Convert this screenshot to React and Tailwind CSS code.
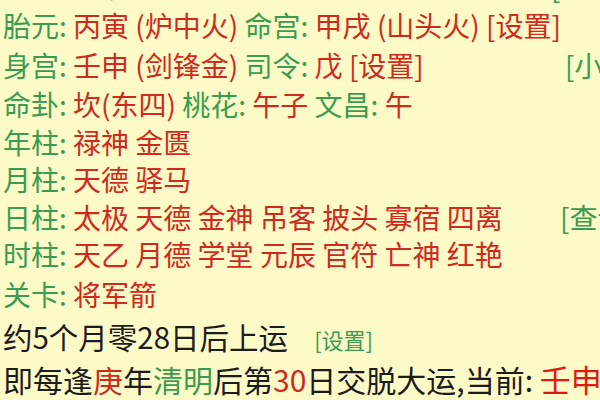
import React from "react";

const G = ({ children }) => <span className="text-[#3a9c50]">{children}</span>;
const R = ({ children }) => <span className="text-[#cf2a1f]">{children}</span>;

export default function App() {
  return (
    <div
      className="w-[600px] h-[400px] overflow-hidden bg-[#fcfac6] text-[28px] leading-[38px] text-[#1c1c1c] whitespace-nowrap"
      style={{ fontFamily: '"Noto Sans CJK SC", "Noto Sans", sans-serif' }}
    >
      <div className="pl-[3px]">
        <div className="h-[39px] mt-[-33px] flex text-[#333]">
          <span className="ml-[96px]">纳</span>
          <span className="ml-[118px]">气</span>
          <span className="ml-[70px]">空</span>
          <span className="ml-[82px]">旺</span>
          <span className="ml-[70px] text-[#3a9c50]">[</span>
        </div>
        <div className="h-[40px]">
          <G>胎元: </G>
          <R>丙寅 (炉中火) </R>
          <G>命宫: </G>
          <R>甲戌 (山头火) [设置]</R>
        </div>
        <div className="h-[39px] flex">
          <span className="w-[562px] shrink-0">
            <G>身宫: </G>
            <R>壬申 (剑锋金) </R>
            <G>司令: </G>
            <R>戊 [设置]</R>
          </span>
          <G>[小运]</G>
        </div>
        <div className="h-[38px]">
          <G>命卦: </G>
          <R>坎(东四) </R>
          <G>桃花: </G>
          <R>午子 </R>
          <G>文昌: </G>
          <R>午</R>
        </div>
        <div className="h-[37px]">
          <G>年柱: </G>
          <R>禄神 金匮</R>
        </div>
        <div className="h-[38px]">
          <G>月柱: </G>
          <R>天德 驿马</R>
        </div>
        <div className="h-[37px] flex">
          <span className="w-[557px] shrink-0">
            <G>日柱: </G>
            <R>太极 天德 金神 吊客 披头 寡宿 四离</R>
          </span>
          <G>[查询]</G>
        </div>
        <div className="h-[40px]">
          <G>时柱: </G>
          <R>天乙 月德 学堂 元辰 官符 亡神 红艳</R>
        </div>
        <div className="h-[42px]">
          <G>关卡: </G>
          <R>将军箭</R>
        </div>
        <div className="h-[43px] flex items-baseline text-[29.5px]">
          <span>约5个月零28日后上运</span>
          <span className="ml-[26px] text-[22px] text-[#3a9c50]">[设置]</span>
        </div>
        <div className="h-[43px] text-[30px]">
          <span>即每逢</span>
          <R>庚</R>
          <span>年</span>
          <G>清明</G>
          <span>后第</span>
          <R>30</R>
          <span>日交脱大运,当前: </span>
          <span className="text-[#e01a12] text-[31px]">壬申</span>
        </div>
      </div>
    </div>
  );
}
